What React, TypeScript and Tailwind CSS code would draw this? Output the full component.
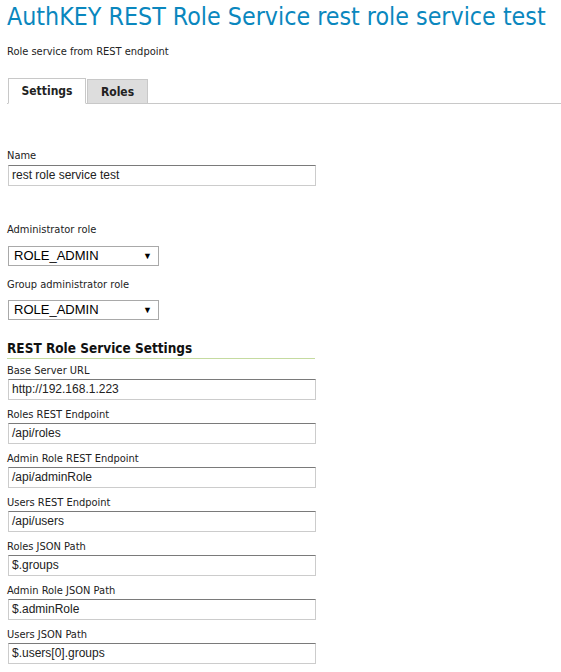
const FONT = "font-['Tahoma','DejaVu_Sans_Condensed','DejaVu_Sans',sans-serif]";

const REST_FIELDS: { label: string; value: string }[] = [
  { label: 'Base Server URL', value: 'http://192.168.1.223' },
  { label: 'Roles REST Endpoint', value: '/api/roles' },
  { label: 'Admin Role REST Endpoint', value: '/api/adminRole' },
  { label: 'Users REST Endpoint', value: '/api/users' },
  { label: 'Roles JSON Path', value: '$.groups' },
  { label: 'Admin Role JSON Path', value: '$.adminRole' },
  { label: 'Users JSON Path', value: '$.users[0].groups' },
];

function TextBox({ value }: { value: string }) {
  return (
    <div className="h-[21px] w-[308px] border border-[#cccccc] border-t-[#7a7a7a] bg-white pl-[3px] font-['Liberation_Sans',Arial,sans-serif] text-[12px] leading-[19px] text-[#222]">
      {value}
    </div>
  );
}

function Select({ value }: { value: string }) {
  return (
    <div className="flex h-[20px] w-[151px] items-center justify-between border border-[#a9a9a9] bg-white pl-[5px] pr-[6px] font-['Liberation_Sans',Arial,sans-serif] text-[13px] leading-[18px] text-black">
      <span>{value}</span>
      <span className="text-[9px]">▼</span>
    </div>
  );
}

function Label({ children }: { children: string }) {
  return <div className="text-[11px] leading-[13px] text-[#222]">{children}</div>;
}

export default function App() {
  return (
    <div className={`${FONT} h-[672px] w-[561px] overflow-hidden bg-white pl-[7px] text-[#222]`}>
      <h1 className="pt-[2px] text-[24.75px] font-normal leading-[30px] text-[#0a87be]">
        AuthKEY REST Role Service rest role service test
      </h1>
      <p className="mt-[13px] text-[11px] leading-[13px]">Role service from REST endpoint</p>

      <div className="mt-[20px] flex items-end border-b border-[#c8c8c8]">
        <div className="-mb-px ml-px flex h-[26px] w-[78px] items-center justify-center border border-[#c8c8c8] border-b-white bg-white text-[12px] font-bold">
          Settings
        </div>
        <div className="ml-[1px] flex h-[24px] w-[61px] items-center justify-center border border-b-0 border-[#c8c8c8] bg-[#dddddd] text-[12px] font-bold">
          Roles
        </div>
      </div>

      <div className="mt-[45px]">
        <Label>Name</Label>
        <div className="mt-[3px] pl-px">
          <TextBox value="rest role service test" />
        </div>
      </div>

      <div className="mt-[37px]">
        <Label>Administrator role</Label>
        <div className="mt-[10px] pl-px">
          <Select value="ROLE_ADMIN" />
        </div>
      </div>

      <div className="mt-[12px]">
        <Label>Group administrator role</Label>
        <div className="mt-[9px] pl-px">
          <Select value="ROLE_ADMIN" />
        </div>
      </div>

      <h2 className="mt-[20px] w-[308px] border-b border-[#c5dba0] pb-[2px] text-[13.5px] font-bold leading-[16px] text-[#111]">
        REST Role Service Settings
      </h2>

      <div className="mt-[5px] flex flex-col gap-[8px]">
        {REST_FIELDS.map((f) => (
          <div key={f.label}>
            <Label>{f.label}</Label>
            <div className="mt-[2px] pl-px">
              <TextBox value={f.value} />
            </div>
          </div>
        ))}
      </div>
    </div>
  );
}
